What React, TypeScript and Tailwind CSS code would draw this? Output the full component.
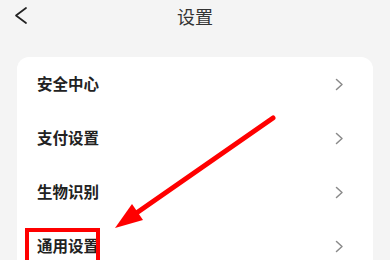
const items = ['安全中心', '支付设置', '生物识别', '通用设置']

function BackIcon() {
  return (
    <svg
      className="absolute left-[14px] top-[6px]"
      width="14"
      height="19"
      viewBox="0 0 14 19"
      fill="none"
    >
      <polyline
        points="12,2 2,9.5 12,17"
        stroke="#222"
        strokeWidth="1.7"
        strokeLinecap="round"
        strokeLinejoin="round"
      />
    </svg>
  )
}

function ArrowIcon() {
  return (
    <svg width="9" height="13" viewBox="0 0 9 13" fill="none">
      <polyline
        points="1.5,1.5 7,6.5 1.5,11.5"
        stroke="#8a8a8a"
        strokeWidth="1.5"
        strokeLinecap="round"
        strokeLinejoin="round"
      />
    </svg>
  )
}

export default function App() {
  return (
    <div
      className="relative h-[260px] w-[390px] overflow-hidden bg-[#f4f4f4]"
      style={{ fontFamily: '"Noto Sans CJK SC", "Noto Sans", sans-serif' }}
    >
      <header className="relative flex h-8 items-center justify-center">
        <BackIcon />
        <h1 className="text-[18px] font-normal text-[#333]">设置</h1>
      </header>

      <div className="px-[17px] pt-[25px]">
        <ul className="rounded-[12px] bg-white">
          {items.map((label) => (
            <li
              key={label}
              className="flex h-[54px] items-center justify-between pl-5 pr-[29px]"
            >
              <span className="text-[15.5px] font-bold text-[#222]">{label}</span>
              <ArrowIcon />
            </li>
          ))}
        </ul>
      </div>

      {/* annotation overlay */}
      <svg
        className="pointer-events-none absolute inset-0"
        width="390"
        height="260"
        viewBox="0 0 390 260"
      >
        <line
          x1="273"
          y1="118"
          x2="135"
          y2="214"
          stroke="#ff0000"
          strokeWidth="5"
          strokeLinecap="round"
        />
        <polygon points="115,228 132,204 143,220" fill="#ff0000" />
        <rect
          x="27"
          y="230"
          width="71"
          height="40"
          fill="none"
          stroke="#ff0000"
          strokeWidth="4"
        />
      </svg>
    </div>
  )
}
